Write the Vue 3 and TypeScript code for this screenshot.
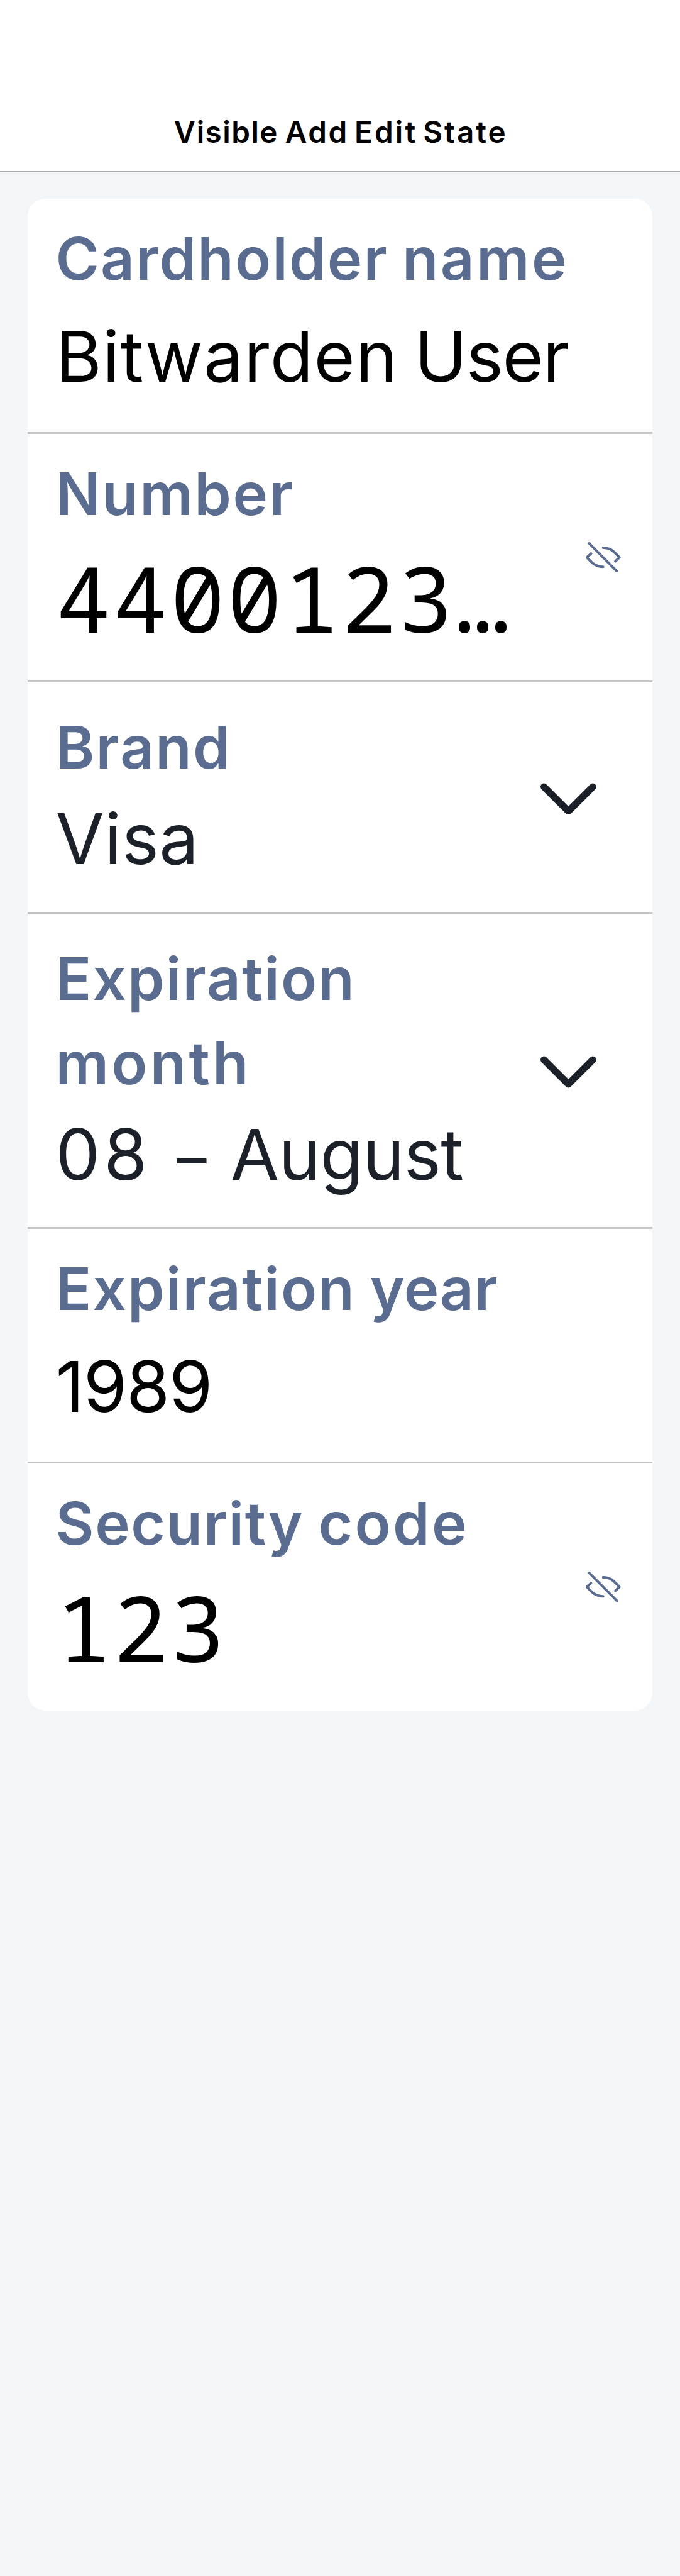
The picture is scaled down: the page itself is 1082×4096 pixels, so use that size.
<script setup lang="ts">
/** A run of text with its own tracking and, for its trailing space, word spacing. */
interface Word {
  text: string
  tracking?: number
  gap?: number
  dash?: boolean
}

interface Field {
  id: string
  label: Word[]
  value: Word[]
  kind: 'text' | 'secret' | 'menu'
  height: number
}

const title: Word[] = [
  { text: 'Visible ', tracking: 1.49, gap: -2.6 },
  { text: 'Add ', tracking: 2.5, gap: -5.1 },
  { text: 'Edit ', tracking: 3.14, gap: -6.3 },
  { text: 'State', tracking: 2.88 },
]

const fields: Field[] = [
  {
    id: 'name',
    label: [
      { text: 'Cardholder ', tracking: 2.14, gap: -3.8 },
      { text: 'name', tracking: 3.29 },
    ],
    value: [
      { text: 'Bitwarden ', tracking: 1.28, gap: -6.8 },
      { text: 'User', tracking: -1.29 },
    ],
    kind: 'text',
    height: 374,
  },
  {
    id: 'number',
    label: [{ text: 'Number', tracking: 2.42 }],
    value: [{ text: '4400123…', tracking: 3.7 }],
    kind: 'secret',
    height: 395,
  },
  {
    id: 'brand',
    label: [{ text: 'Brand', tracking: 2.13 }],
    value: [{ text: 'Visa', tracking: 0.42 }],
    kind: 'menu',
    height: 368,
  },
  {
    id: 'month',
    label: [
      { text: 'Expiration ', tracking: 2.08 },
      { text: 'month', tracking: 4.18 },
    ],
    value: [
      { text: '08 ', tracking: 6, gap: -1 },
      { text: '–', dash: true },
      { text: ' August', tracking: -0.6, gap: 3 },
    ],
    kind: 'menu',
    height: 501,
  },
  {
    id: 'year',
    label: [
      { text: 'Expiration ', tracking: 2.08, gap: -2.9 },
      { text: 'year', tracking: 0.55 },
    ],
    value: [{ text: '1989', tracking: -1.23 }],
    kind: 'text',
    height: 373,
  },
  {
    id: 'code',
    label: [
      { text: 'Security ', tracking: 1.55, gap: -2 },
      { text: 'code', tracking: 3.26 },
    ],
    value: [{ text: '123', tracking: 3.7 }],
    kind: 'secret',
    height: 393,
  },
]

const spacing = (w: Word) => ({
  letterSpacing: `${w.tracking ?? 0}px`,
  wordSpacing: `${w.gap ?? 0}px`,
})
</script>

<template>
  <div class="screen">
    <header class="nav">
      <h1><span v-for="w in title" :key="w.text" :style="spacing(w)">{{ w.text }}</span></h1>
    </header>
    <main class="card">
      <section v-for="f in fields" :key="f.id" class="row" :class="f.kind" :style="{ height: f.height + 'px' }">
        <div class="copy">
          <div class="label"><span v-for="w in f.label" :key="w.text" :style="spacing(w)">{{ w.text }}</span></div>
          <div class="value"><span v-for="w in f.value" :key="w.text" :class="{ dash: w.dash }" :style="spacing(w)">{{ w.text }}</span></div>
        </div>
        <svg v-if="f.kind === 'secret'" class="eye" viewBox="0 0 60 52.6" aria-hidden="true">
          <path d="M6 2.2 54 50.4M30 9.7C42 9.7 47 14.5 58 26.3L51 33M9 19.7 2 26.3C13 38 18 42.4 30 42.4" />
        </svg>
        <svg v-if="f.kind === 'menu'" class="chevron" viewBox="0 0 96 60" aria-hidden="true">
          <path d="M6 12 48 54 90 12" />
        </svg>
      </section>
    </main>
  </div>
</template>

<style>
body { background: #f3f6f9; }
</style>

<style scoped>
.screen {
  display: flow-root;
  box-sizing: border-box;
  height: 4096px;
  background: #f3f6f9;
  font-family: Inter, sans-serif;
  color: #000;
}
.nav {
  box-sizing: border-box;
  height: 273px;
  padding: 181px 0 0 2px;
  background: #fff;
  border-bottom: 1px solid #a6a8aa;
  text-align: center;
}
h1 { margin: 0; font-size: 47.6px; line-height: 58px; font-weight: 600; }
.card { margin: 43px 44.4px 0; background: #fff; border-radius: 28px; }
.row {
  box-sizing: border-box;
  display: flex;
  align-items: center;
  justify-content: space-between;
  padding-left: 44.1px;
  border-bottom: 3px solid #c5c5c6;
}
.row:last-child { border-bottom: 0; }
.copy { align-self: flex-start; padding-top: 28px; }
.label { color: #5a6d91; font-size: 94px; font-weight: 600; line-height: 134px; }
.value { margin-top: 12.5px; font-size: 112px; line-height: 150px; white-space: nowrap; }
.menu .copy { width: 640px; padding-top: 35.5px; }
.menu .value { margin-top: 3px; color: #1b2029; }
.secret .value { padding-left: 1px; font-family: "Noto Sans Mono", "DejaVu Sans Mono", monospace; font-size: 145px; line-height: 170px; }
.dash { font-family: "Open Sans", sans-serif; line-height: 0; }
svg { flex: none; fill: none; stroke-linecap: round; stroke-linejoin: round; }
.eye { width: 55.5px; height: 48.6px; margin-right: 50px; stroke: #5a6d91; stroke-width: 4.3; }
.chevron { width: 88.8px; height: 55.5px; margin-right: 88.7px; stroke: #1b2029; stroke-width: 12; }
</style>
